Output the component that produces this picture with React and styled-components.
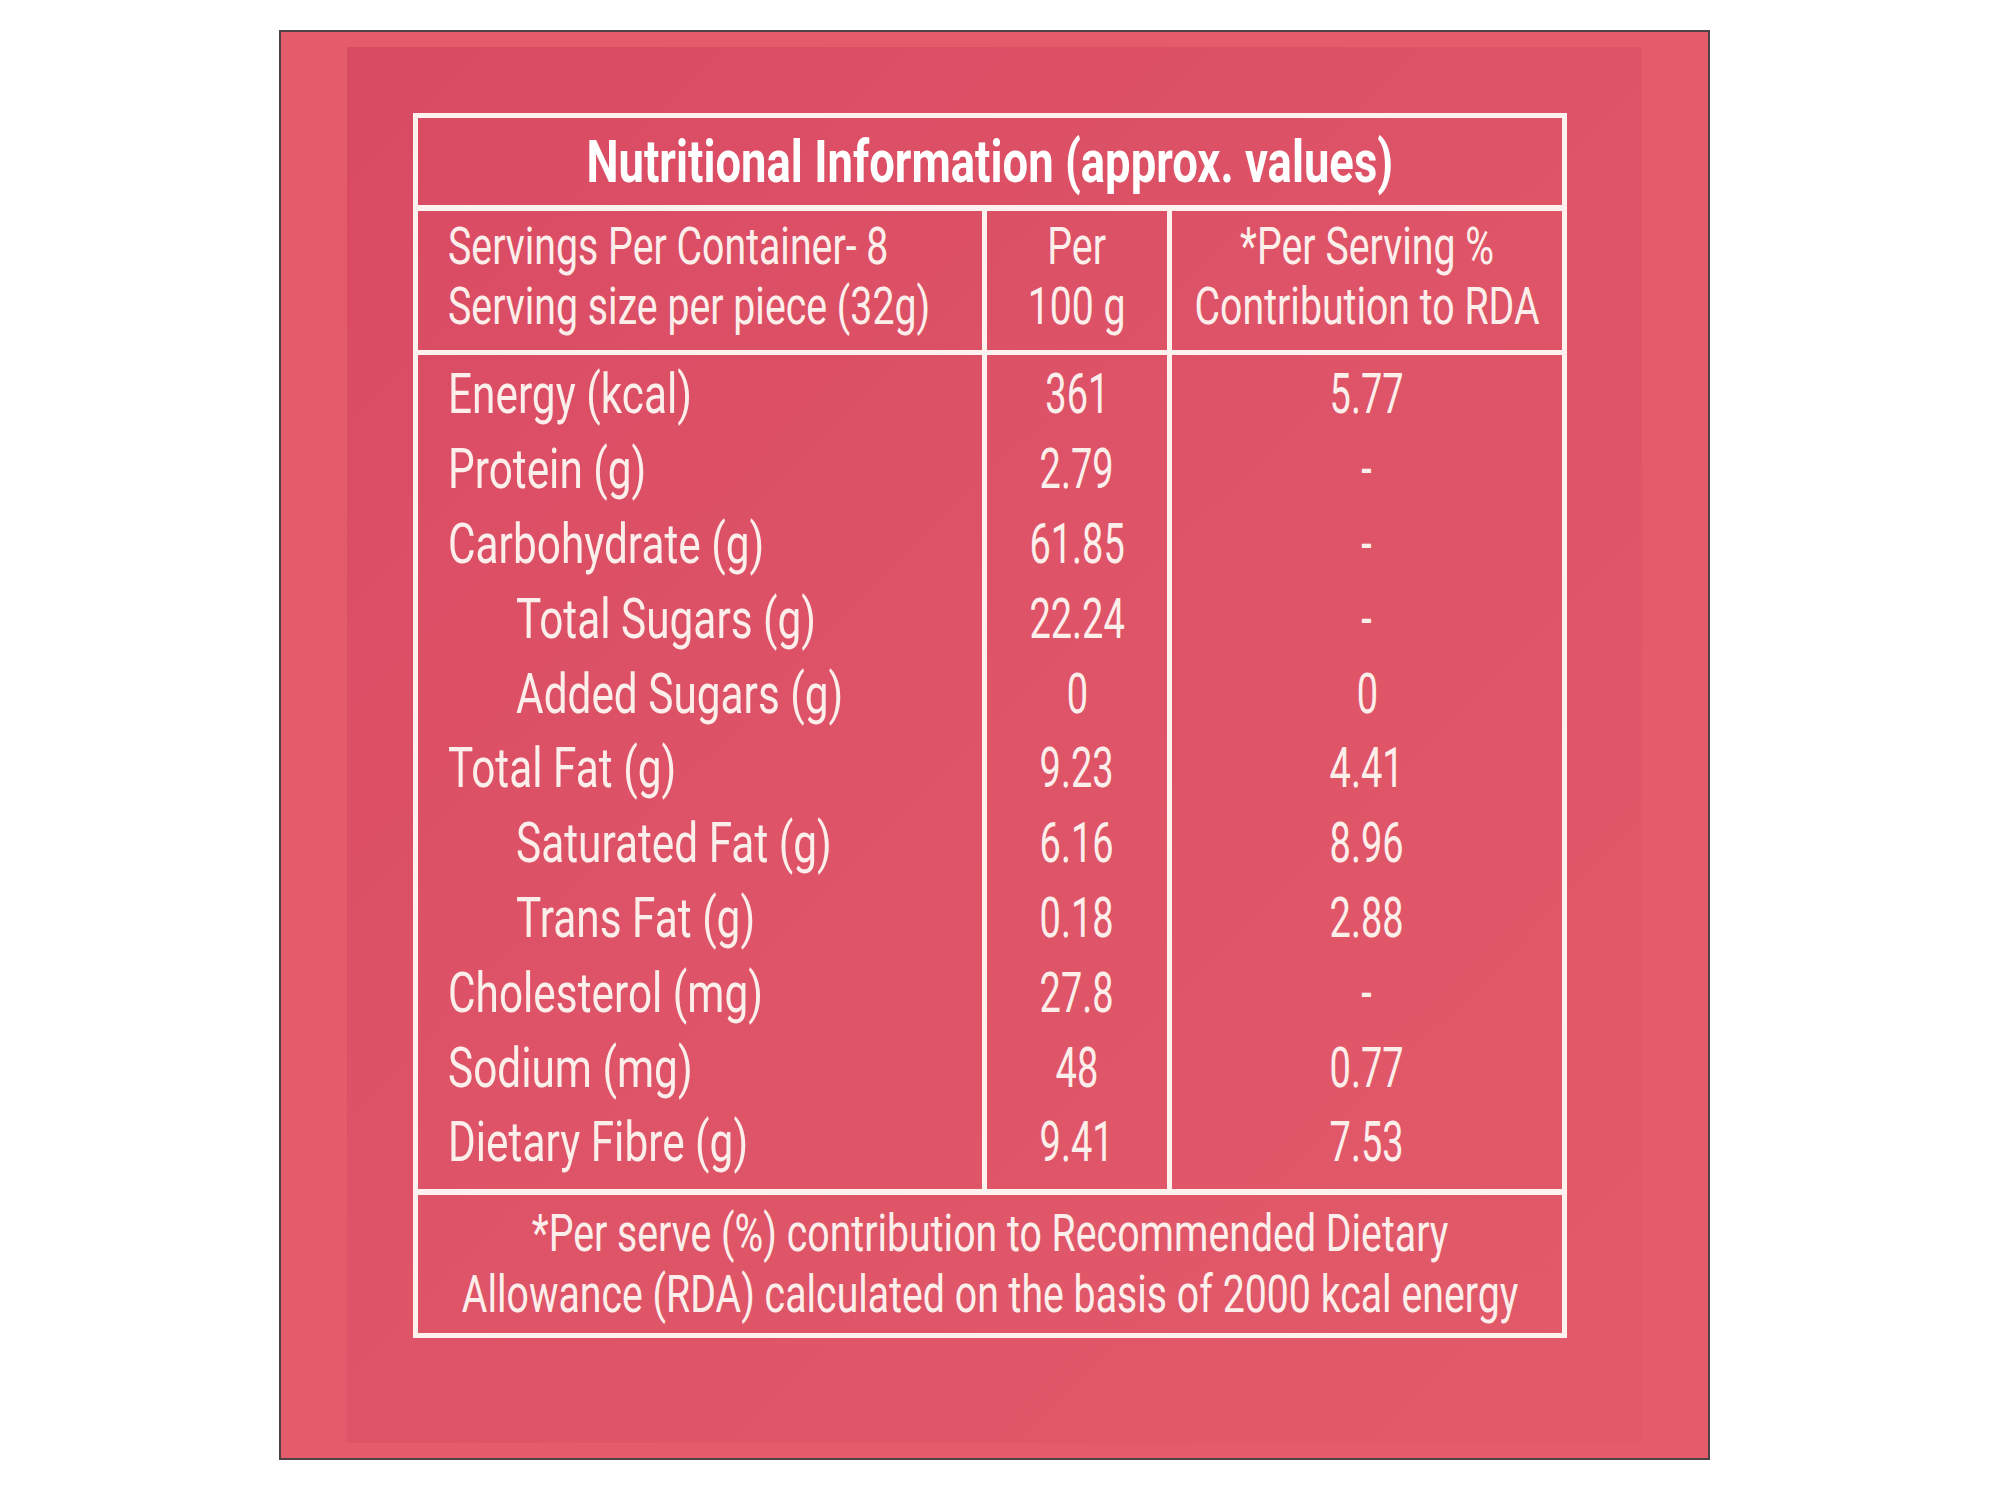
import React from 'react';
import styled, { createGlobalStyle } from 'styled-components';

const rows = [
    { name: 'Energy (kcal)', per100: '361', rda: '5.77' },
    { name: 'Protein (g)', per100: '2.79', rda: '-' },
    { name: 'Carbohydrate (g)', per100: '61.85', rda: '-' },
    { name: 'Total Sugars (g)', per100: '22.24', rda: '-', sub: true },
    { name: 'Added Sugars (g)', per100: '0', rda: '0', sub: true },
    { name: 'Total Fat (g)', per100: '9.23', rda: '4.41' },
    { name: 'Saturated Fat (g)', per100: '6.16', rda: '8.96', sub: true },
    { name: 'Trans Fat (g)', per100: '0.18', rda: '2.88', sub: true },
    { name: 'Cholesterol (mg)', per100: '27.8', rda: '-' },
    { name: 'Sodium (mg)', per100: '48', rda: '0.77' },
    { name: 'Dietary Fibre (g)', per100: '9.41', rda: '7.53' },
];

const App = () => {
    return (
        <>
            <GlobalStyle />
            <Page>
                <Card>
                    <Panel>
                        <Table>
                            <Title>
                                <Squeeze center>Nutritional Information (approx. values)</Squeeze>
                            </Title>
                            <HeaderRow>
                                <HeadCell>
                                    <Squeeze>
                                        Servings Per Container- 8<br />
                                        Serving size per piece (32g)
                                    </Squeeze>
                                </HeadCell>
                                <HeadCell center divided>
                                    <Squeeze center>Per<br />100 g</Squeeze>
                                </HeadCell>
                                <HeadCell center divided>
                                    <Squeeze center>*Per Serving %<br />Contribution to RDA</Squeeze>
                                </HeadCell>
                            </HeaderRow>
                            <Body>
                                <BodyColumn>
                                    {rows.map((r) => (
                                        <Cell key={r.name} sub={r.sub}>
                                            <Squeeze>{r.name}</Squeeze>
                                        </Cell>
                                    ))}
                                </BodyColumn>
                                <BodyColumn divided>
                                    {rows.map((r) => (
                                        <Cell key={r.name} center>
                                            <Squeeze center numeric>{r.per100}</Squeeze>
                                        </Cell>
                                    ))}
                                </BodyColumn>
                                <BodyColumn divided>
                                    {rows.map((r) => (
                                        <Cell key={r.name} center>
                                            <Squeeze center numeric>{r.rda}</Squeeze>
                                        </Cell>
                                    ))}
                                </BodyColumn>
                            </Body>
                            <Footer>
                                <Squeeze center>
                                    *Per serve (%) contribution to Recommended Dietary<br />
                                    Allowance (RDA) calculated on the basis of 2000 kcal energy
                                </Squeeze>
                            </Footer>
                        </Table>
                    </Panel>
                </Card>
            </Page>
        </>
    );
};

export default App;

const GlobalStyle = createGlobalStyle`
    body {
        margin: 0;
        background: #ffffff;
        font-family: Roboto, "Liberation Sans", sans-serif;
    }
`;

const Page = styled.div`
    padding: 30px 0 34px 279px;
`;

const Card = styled.div`
    width: 1431px;
    height: 1430px;
    box-sizing: border-box;
    border: 2px solid #4d4346;
    background: #e45c6b;
    padding: 15px 66px;
`;

const Panel = styled.div`
    height: 100%;
    box-sizing: border-box;
    padding: 66px 75px 0 66px;
    background: linear-gradient(135deg, #d94a63 0%, #de5367 45%, #e25a6a 100%);
`;

const LINE = '#fdf2ee';
const COLUMNS = '564px 185px minmax(0, 1fr)';

const Table = styled.div`
    border: 5px solid ${LINE};
    color: #fcefeb;
`;

// the label font is a condensed face; squeeze the regular one to match
const Squeeze = styled.span`
    display: inline-block;
    white-space: nowrap;
    transform: scaleX(${({ numeric }) => (numeric ? 0.69 : 0.77)});
    transform-origin: ${({ center }) => (center ? 'center' : 'left')};
    text-align: ${({ center }) => (center ? 'center' : 'left')};
`;

const Title = styled.div`
    height: 87px;
    border-bottom: 6px solid ${LINE};
    display: flex;
    align-items: center;
    justify-content: center;
    font-size: 59px;
    font-weight: 700;
    color: #ffffff;
`;

const HeaderRow = styled.div`
    display: grid;
    grid-template-columns: ${COLUMNS};
    height: 139px;
    border-bottom: 5px solid ${LINE};
`;

const HeadCell = styled.div`
    min-width: 0;
    display: flex;
    align-items: center;
    justify-content: ${({ center }) => (center ? 'center' : 'flex-start')};
    padding-left: ${({ center }) => (center ? '0' : '30px')};
    border-left: ${({ divided }) => (divided ? `5px solid ${LINE}` : 'none')};
    font-size: 51px;
    line-height: 60px;
    padding-bottom: 8px;
`;

const Body = styled.div`
    display: grid;
    grid-template-columns: ${COLUMNS};
    height: 834px;
    border-bottom: 6px solid ${LINE};
`;

const BodyColumn = styled.div`
    min-width: 0;
    padding-top: 2px;
    border-left: ${({ divided }) => (divided ? `5px solid ${LINE}` : 'none')};
`;

const Cell = styled.div`
    height: 74.8px;
    display: flex;
    align-items: center;
    justify-content: ${({ center }) => (center ? 'center' : 'flex-start')};
    padding-left: ${({ center, sub }) => (center ? '0' : sub ? '98px' : '30px')};
    font-size: 55px;
`;

const Footer = styled.div`
    height: 138px;
    display: flex;
    align-items: center;
    justify-content: center;
    font-size: 51px;
    line-height: 61px;
`;
